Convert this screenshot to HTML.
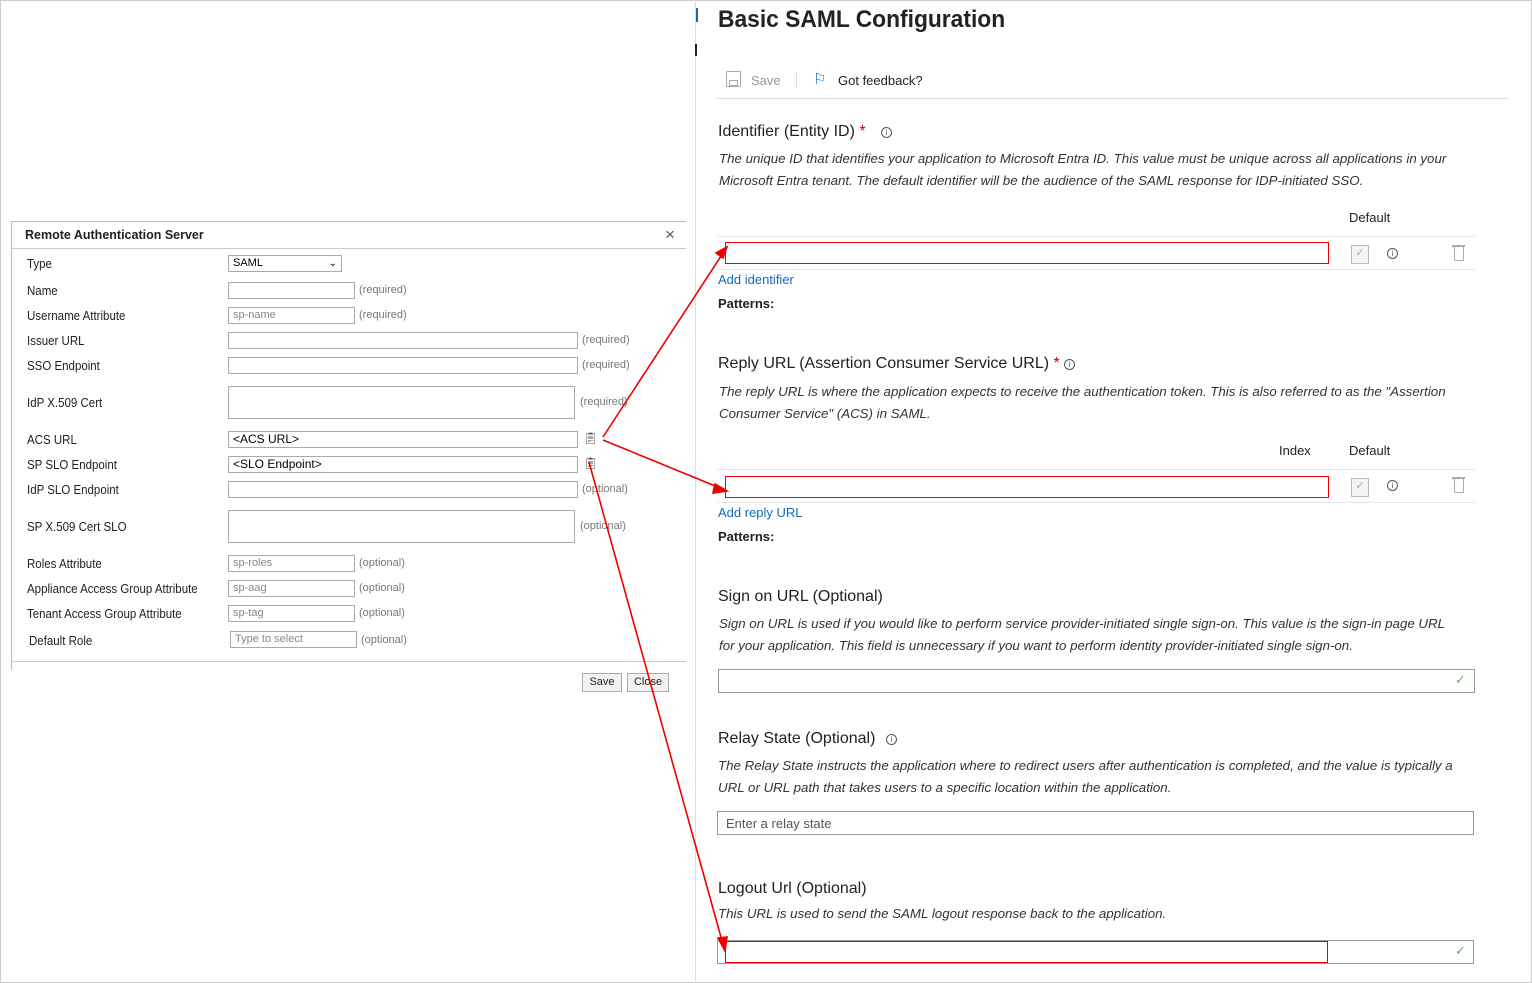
<!DOCTYPE html>
<html><head><meta charset="utf-8"><style>
*{margin:0;padding:0;box-sizing:border-box}
body{width:1532px;height:983px;position:relative;background:#fff;font-family:"Liberation Sans",sans-serif;overflow:hidden;color:#222}
.a{position:absolute;white-space:nowrap}
.l{font-size:12.5px;color:#222;transform:scaleX(.92);transform-origin:left}
.in{position:absolute;border:1px solid #aaa;height:17px;background:#fff;font-size:11px;color:#888;padding-left:4px;line-height:15px}
.h{font-size:11px;color:#777}
.t{font-size:16px;color:#222}
.d{font-size:13.3px;font-style:italic;color:#333}
.lk{font-size:13px;color:#0f6cbd}
.b{font-size:12.5px;font-weight:bold;color:#222}
.red{position:absolute;border:1.5px solid #e00}
.fi{position:absolute;border:1px solid #999;height:24px;background:#fff}
.hr{position:absolute;height:1px;background:#e5e5e5}
.i{position:absolute;width:11px;height:11px;border:1px solid #555;border-radius:50%;font-size:8px;text-align:center;line-height:9px;color:#555}
.tr{position:absolute;width:10px;height:14px;border:1.5px solid #aaa;border-top:none;border-radius:0 0 1px 1px}
.tr:before{content:"";position:absolute;left:-3px;top:-2px;width:13px;height:1.5px;background:#aaa}
</style></head><body>
<div class="a" style="left:0;top:0;width:1532px;height:983px;border:1px solid #ccc"></div>
<div class="a" style="left:695px;top:0;width:1px;height:983px;background:#ddd"></div>
<div class="a" style="left:696px;top:8px;width:2px;height:14px;background:#0f6cbd"></div>
<div class="a" style="left:695px;top:44px;width:2px;height:12px;background:#222"></div>

<!-- left dialog -->
<div class="a" style="left:11px;top:221px;width:675px;height:1px;background:#bbb"></div>
<div class="a" style="left:11px;top:221px;width:1px;height:449px;background:#bbb"></div>
<div class="a" style="left:11px;top:248px;width:675px;height:1px;background:#ccc"></div>
<div class="a" style="left:11px;top:661px;width:675px;height:1px;background:#ccc"></div>
<div class="a b" style="left:25px;top:228px;font-size:12.5px">Remote Authentication Server</div>
<div class="a" style="left:665px;top:225px;font-size:17px;color:#555">×</div>

<div class="a l" style="left:27px;top:257px">Type</div>
<div class="in" style="left:228px;top:255px;width:114px;color:#000;font-size:11px">SAML<span style="position:absolute;right:4px;top:0;font-size:10px">&#x2304;</span></div>
<div class="a l" style="left:27px;top:284px">Name</div>
<div class="in" style="left:228px;top:282px;width:127px"></div><div class="a h" style="left:359px;top:284px">(required)</div>
<div class="a l" style="left:27px;top:309px">Username Attribute</div>
<div class="in" style="left:228px;top:307px;width:127px">sp-name</div><div class="a h" style="left:359px;top:309px">(required)</div>
<div class="a l" style="left:27px;top:334px">Issuer URL</div>
<div class="in" style="left:228px;top:332px;width:350px"></div><div class="a h" style="left:582px;top:334px">(required)</div>
<div class="a l" style="left:27px;top:359px">SSO Endpoint</div>
<div class="in" style="left:228px;top:357px;width:350px"></div><div class="a h" style="left:582px;top:359px">(required)</div>
<div class="a l" style="left:27px;top:396px">IdP X.509 Cert</div>
<div class="in" style="left:228px;top:386px;width:347px;height:33px"></div><div class="a h" style="left:580px;top:396px">(required)</div>
<div class="a l" style="left:27px;top:433px">ACS URL</div>
<div class="in" style="left:228px;top:431px;width:350px;color:#000;font-size:12px">&lt;ACS URL&gt;</div><div class="a" style="left:583px;top:431px;font-size:12px;color:#555">&#x1F4CB;&#xFE0E;</div>
<div class="a l" style="left:27px;top:458px">SP SLO Endpoint</div>
<div class="in" style="left:228px;top:456px;width:350px;color:#000;font-size:12px">&lt;SLO Endpoint&gt;</div><div class="a" style="left:583px;top:456px;font-size:12px;color:#555">&#x1F4CB;&#xFE0E;</div>
<div class="a l" style="left:27px;top:483px">IdP SLO Endpoint</div>
<div class="in" style="left:228px;top:481px;width:350px"></div><div class="a h" style="left:582px;top:483px">(optional)</div>
<div class="a l" style="left:27px;top:520px">SP X.509 Cert SLO</div>
<div class="in" style="left:228px;top:510px;width:347px;height:33px"></div><div class="a h" style="left:580px;top:520px">(optional)</div>
<div class="a l" style="left:27px;top:557px">Roles Attribute</div>
<div class="in" style="left:228px;top:555px;width:127px">sp-roles</div><div class="a h" style="left:359px;top:557px">(optional)</div>
<div class="a l" style="left:27px;top:582px">Appliance Access Group Attribute</div>
<div class="in" style="left:228px;top:580px;width:127px">sp-aag</div><div class="a h" style="left:359px;top:582px">(optional)</div>
<div class="a l" style="left:27px;top:607px">Tenant Access Group Attribute</div>
<div class="in" style="left:228px;top:605px;width:127px">sp-tag</div><div class="a h" style="left:359px;top:607px">(optional)</div>
<div class="a l" style="left:29px;top:634px">Default Role</div>
<div class="in" style="left:230px;top:631px;width:127px">Type to select</div><div class="a h" style="left:361px;top:634px">(optional)</div>
<div class="a" style="left:582px;top:673px;width:40px;height:19px;border:1px solid #aaa;background:#f2f2f2;font-size:11px;text-align:center;line-height:17px">Save</div>
<div class="a" style="left:627px;top:673px;width:42px;height:19px;border:1px solid #aaa;background:#f2f2f2;font-size:11px;text-align:center;line-height:17px">Close</div>

<!-- right -->
<div class="a" style="left:718px;top:6px;font-size:24px;font-weight:bold;color:#222;transform:scaleX(.95);transform-origin:left">Basic SAML Configuration</div>
<div class="a" style="left:726px;top:71px;width:15px;height:16px;border:1.5px solid #aaa;border-radius:1px"></div>
<div class="a" style="left:729px;top:80px;width:9px;height:6px;border:1px solid #aaa"></div>
<div class="a" style="left:751px;top:73px;font-size:13px;color:#999">Save</div>
<div class="a" style="left:796px;top:71px;width:1px;height:18px;background:#ddd"></div>
<div class="a" style="left:813px;top:70px;font-size:15px;color:#0f6cbd">&#x2690;</div>
<div class="a" style="left:838px;top:73px;font-size:13px;color:#222">Got feedback?</div>
<div class="hr" style="left:717px;top:98px;width:791px;background:#ddd"></div>

<div class="a t" style="left:718px;top:123px">Identifier (Entity ID) <span style="color:#c00">*</span></div>
<div class="i" style="left:881px;top:127px">i</div>
<div class="a d" style="left:719px;top:148px;line-height:22px">The unique ID that identifies your application to Microsoft Entra ID. This value must be unique across all applications in your<br>Microsoft Entra tenant. The default identifier will be the audience of the SAML response for IDP-initiated SSO.</div>
<div class="a" style="left:1349px;top:210px;font-size:13px">Default</div>
<div class="hr" style="left:717px;top:236px;width:758px"></div>
<div class="red" style="left:725px;top:242px;width:604px;height:22px"></div>
<div class="a" style="left:1351px;top:245px;width:18px;height:19px;border:1px solid #bbb;background:#f4f4f4;font-size:11px;color:#aaa;text-align:center">✓</div>
<div class="i" style="left:1387px;top:248px">i</div>
<div class="tr" style="left:1454px;top:247px"></div>
<div class="hr" style="left:717px;top:269px;width:758px"></div>
<div class="a lk" style="left:718px;top:272px">Add identifier</div>
<div class="a" style="left:718px;top:296px;font-size:13px;font-weight:bold">Patterns:</div>

<div class="a t" style="left:718px;top:355px">Reply URL (Assertion Consumer Service URL) <span style="color:#c00">*</span></div>
<div class="i" style="left:1064px;top:359px">i</div>
<div class="a d" style="left:719px;top:381px;line-height:22px">The reply URL is where the application expects to receive the authentication token. This is also referred to as the "Assertion<br>Consumer Service" (ACS) in SAML.</div>
<div class="a" style="left:1279px;top:443px;font-size:13px">Index</div>
<div class="a" style="left:1349px;top:443px;font-size:13px">Default</div>
<div class="hr" style="left:717px;top:469px;width:758px"></div>
<div class="red" style="left:725px;top:476px;width:604px;height:22px"></div>
<div class="a" style="left:1351px;top:478px;width:18px;height:19px;border:1px solid #bbb;background:#f4f4f4;font-size:11px;color:#aaa;text-align:center">✓</div>
<div class="i" style="left:1387px;top:480px">i</div>
<div class="tr" style="left:1454px;top:479px"></div>
<div class="hr" style="left:717px;top:502px;width:758px"></div>
<div class="a lk" style="left:718px;top:505px">Add reply URL</div>
<div class="a" style="left:718px;top:529px;font-size:13px;font-weight:bold">Patterns:</div>

<div class="a t" style="left:718px;top:588px">Sign on URL (Optional)</div>
<div class="a d" style="left:719px;top:613px;line-height:22px">Sign on URL is used if you would like to perform service provider-initiated single sign-on. This value is the sign-in page URL<br>for your application. This field is unnecessary if you want to perform identity provider-initiated single sign-on.</div>
<div class="fi" style="left:718px;top:669px;width:757px"></div>
<div class="a" style="left:1455px;top:672px;font-size:13px;color:#5cb85c">✓</div>

<div class="a t" style="left:718px;top:730px">Relay State (Optional)</div>
<div class="i" style="left:886px;top:734px">i</div>
<div class="a d" style="left:718px;top:755px;line-height:22px">The Relay State instructs the application where to redirect users after authentication is completed, and the value is typically a<br>URL or URL path that takes users to a specific location within the application.</div>
<div class="fi" style="left:717px;top:811px;width:757px;font-size:13px;color:#555;padding:4px 8px">Enter a relay state</div>

<div class="a t" style="left:718px;top:880px">Logout Url (Optional)</div>
<div class="a d" style="left:718px;top:906px">This URL is used to send the SAML logout response back to the application.</div>
<div class="fi" style="left:717px;top:940px;width:757px"></div>
<div class="red" style="left:725px;top:941px;width:603px;height:22px"></div>
<div class="a" style="left:1455px;top:943px;font-size:13px;color:#5cb85c">✓</div>

<svg class="a" style="left:0;top:0" width="1532" height="983">
<g stroke="#e00" stroke-width="1.6" fill="#e00">
<line x1="603" y1="437" x2="725" y2="250"/>
<polygon points="727,247 716,253 723,258"/>
<line x1="603" y1="440" x2="725" y2="490"/>
<polygon points="727,491 715,484 713,493"/>
<line x1="589" y1="462" x2="724" y2="948"/>
<polygon points="725,951 718,938 727,937"/>
</g></svg>
</body></html>
